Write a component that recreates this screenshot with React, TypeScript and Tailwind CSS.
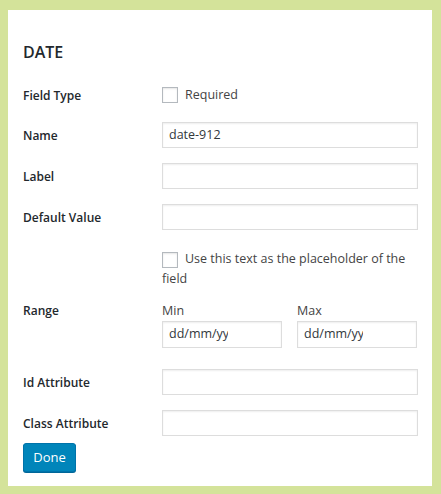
import React from "react";

const font = { fontFamily: '"Open Sans", "Noto Sans", Arial, sans-serif' };

function Input({ value = "", className = "" }: { value?: string; className?: string }) {
  return (
    <div
      className={`h-[26px] border border-[#dddddd] bg-white shadow-[inset_0_1px_2px_rgba(0,0,0,0.07)] flex items-center px-[6px] text-[12.5px] text-[#32373c] ${className}`}
    >
      {value}
    </div>
  );
}

function DateInput() {
  return (
    <div className="h-[27px] w-[120px] border border-[#dddddd] bg-white shadow-[inset_0_1px_2px_rgba(0,0,0,0.07)] flex items-center px-[6px] text-[12.5px] text-[#32373c]">
      <span className="block w-[59px] overflow-hidden whitespace-nowrap">dd/mm/yyyy</span>
    </div>
  );
}

function Checkbox() {
  return <span className="inline-block w-[16px] h-[16px] border border-[#b4b9be] bg-white align-middle shadow-[inset_0_1px_2px_rgba(0,0,0,0.1)]" />;
}

function Label({ children }: { children: React.ReactNode }) {
  return <div className="w-[139px] shrink-0 text-[12px] font-semibold text-[#23282d] pt-[2px]">{children}</div>;
}

export default function App() {
  return (
    <div className="w-[441px] h-[494px] bg-[#d4e39a] pt-[10px] pl-[8px]" style={font}>
      <div className="w-[424px] h-[476px] bg-white pl-[15px] pt-[31px] flex flex-col">
        <div className="h-[22px] leading-[22px] text-[16px] font-semibold text-[#23282d]">DATE</div>

        <div className="mt-[22px] h-[20px] flex items-center">
          <Label>Field Type</Label>
          <div className="flex items-center text-[12.5px] text-[#444]">
            <Checkbox />
            <span className="ml-[7px]">Required</span>
          </div>
        </div>

        <div className="mt-[17px] flex items-center">
          <Label>Name</Label>
          <Input value="date-912" className="w-[256px]" />
        </div>
        <div className="mt-[15px] flex items-center">
          <Label>Label</Label>
          <Input className="w-[256px]" />
        </div>
        <div className="mt-[15px] flex items-center">
          <Label>Default Value</Label>
          <Input className="w-[256px]" />
        </div>

        <div className="mt-[19px] flex">
          <div className="w-[139px] shrink-0" />
          <div className="w-[256px] text-[12.5px] leading-[20px] text-[#444]">
            <Checkbox />
            <span className="ml-[7px]">Use this text as the placeholder of the field</span>
          </div>
        </div>

        <div className="mt-[13px] flex">
          <div className="w-[139px] shrink-0 h-[18px] flex items-center text-[12px] font-semibold text-[#23282d]">Range</div>
          <div className="flex gap-[15px]">
            <div className="flex flex-col">
              <div className="h-[18px] leading-[18px] text-[12.5px] text-[#444] mb-[1px]">Min</div>
              <DateInput />
            </div>
            <div className="flex flex-col">
              <div className="h-[18px] leading-[18px] text-[12.5px] text-[#444] mb-[1px]">Max</div>
              <DateInput />
            </div>
          </div>
        </div>

        <div className="mt-[21px] flex items-center">
          <Label>Id Attribute</Label>
          <Input className="w-[256px]" />
        </div>
        <div className="mt-[15px] flex items-center">
          <Label>Class Attribute</Label>
          <Input className="w-[256px]" />
        </div>

        <div className="mt-[7px]">
          <button className="h-[29px] w-[53px] rounded-[3px] bg-[#0085ba] border border-[#0073aa] text-white text-[13px] shadow-[0_1px_0_#006799]">
            Done
          </button>
        </div>
      </div>
    </div>
  );
}
